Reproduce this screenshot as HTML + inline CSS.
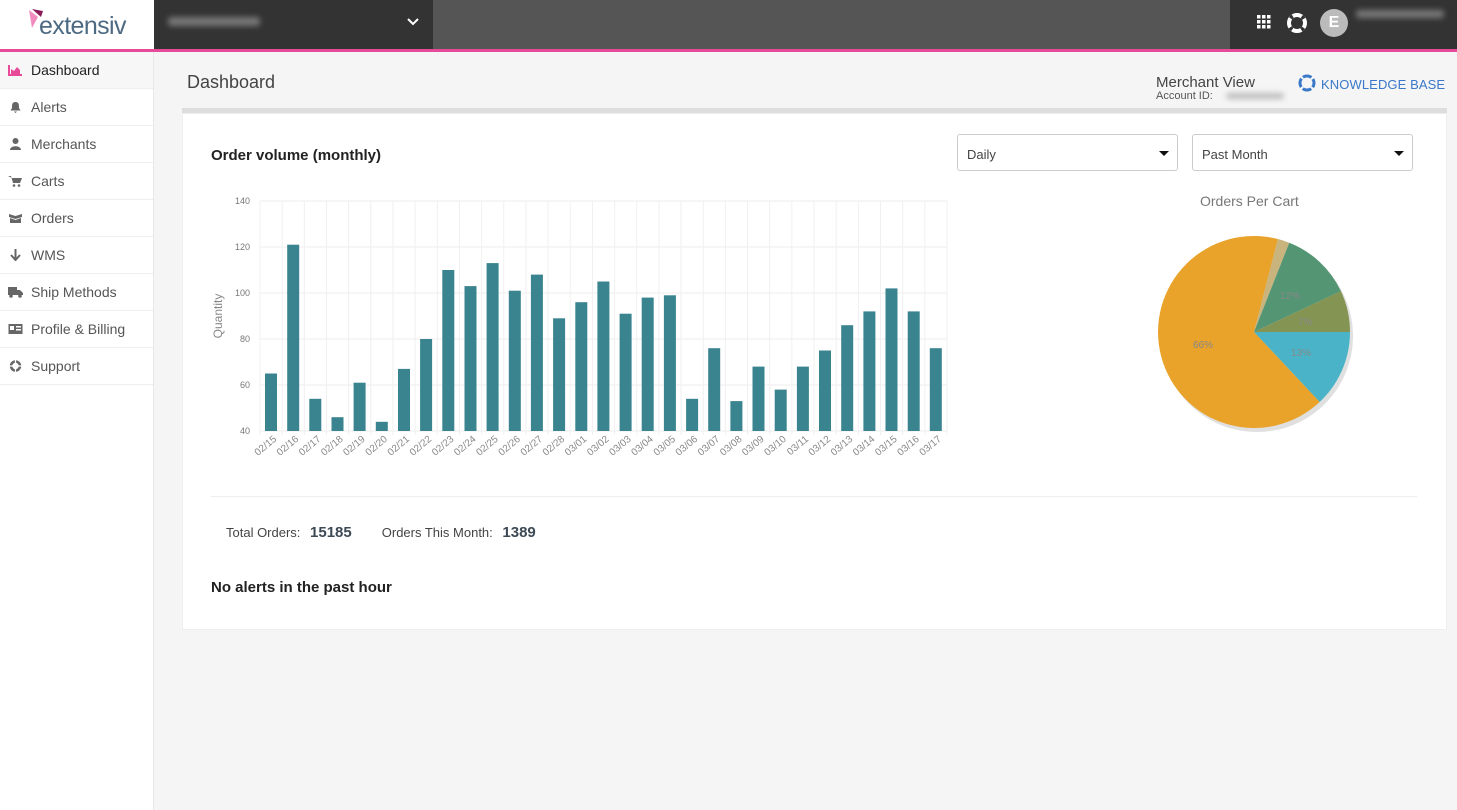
<!DOCTYPE html>
<html><head><meta charset="utf-8"><style>
*{margin:0;padding:0;box-sizing:border-box}
body{width:1457px;height:810px;overflow:hidden;font-family:"Liberation Sans",sans-serif;background:#f5f5f5;position:relative;color:#333}
.top{position:absolute;left:0;top:0;width:1457px;height:49px;background:#555}
.logo{position:absolute;left:0;top:0;width:154px;height:49px;background:#fff}
.d1{position:absolute;left:154px;top:0;width:279px;height:49px;background:#333}
.d2{position:absolute;left:1230px;top:0;width:227px;height:49px;background:#333}
.pink{position:absolute;left:0;top:49px;width:1457px;height:3px;background:#e84a9a}
.side{position:absolute;left:0;top:52px;width:154px;height:758px;background:#fff;border-right:1px solid #e8e8e8}
.item{height:37px;border-bottom:1px solid #eee;display:flex;align-items:center;font-size:14px;color:#555;padding-left:8px}
.item .ic{width:15px;height:12px;margin-right:8px;display:inline-block}
.item.act{background:#f7f7f7;color:#222}
.blur{background:#888;filter:blur(3px);position:absolute;border-radius:3px}
.card{position:absolute;left:182px;top:113px;width:1265px;height:517px;background:#fff;border:1px solid #eee}
.sel{position:absolute;top:134px;width:221px;height:37px;border:1px solid #ccc;border-radius:3px;background:#fff;font-size:13px;color:#444;padding:12px 9px}
.sel:after{content:"";position:absolute;right:8px;top:16px;border:5px solid transparent;border-top:5px solid #111}
</style></head><body>
<div class="top"></div>
<div class="logo">
<svg width="20" height="22" style="position:absolute;left:28px;top:9px" viewBox="0 0 20 22"><path d="M1 1 L10 8 L4 19 Z" fill="#f08cc0"/><path d="M4 0 L13 8 L15 2 Z" fill="#8a1c5a"/></svg>
<span style="position:absolute;left:39px;top:12px;font-size:25px;color:#4e6a82;letter-spacing:-0.6px">extensiv</span>
</div>
<div class="d1"><div class="blur" style="left:14px;top:17px;width:92px;height:9px;background:#777"></div>
<svg style="position:absolute;left:253px;top:18px" width="12" height="8" viewBox="0 0 12 8"><path d="M1 1 L6 6 L11 1" stroke="#fff" stroke-width="2" fill="none"/></svg></div>
<div class="d2">
<svg style="position:absolute;left:27px;top:15px" width="14" height="14" viewBox="0 0 14 14" fill="#fff"><rect x="0" y="0" width="3.5" height="3.5"/><rect x="5" y="0" width="3.5" height="3.5"/><rect x="10" y="0" width="3.5" height="3.5"/><rect x="0" y="5" width="3.5" height="3.5"/><rect x="5" y="5" width="3.5" height="3.5"/><rect x="10" y="5" width="3.5" height="3.5"/><rect x="0" y="10" width="3.5" height="3.5"/><rect x="5" y="10" width="3.5" height="3.5"/><rect x="10" y="10" width="3.5" height="3.5"/></svg>
<svg style="position:absolute;left:57px;top:13px" width="20" height="20" viewBox="0 0 20 20"><circle cx="10" cy="10" r="8" fill="none" stroke="#fff" stroke-width="4"/><circle cx="10" cy="10" r="8" fill="none" stroke="#333" stroke-width="4" stroke-dasharray="3 9.5" stroke-dashoffset="-5"/></svg>
<div style="position:absolute;left:90px;top:9px;width:28px;height:28px;border-radius:50%;background:#bbb;color:#fff;font-weight:bold;font-size:16px;text-align:center;line-height:28px">E</div>
<div class="blur" style="left:126px;top:10px;width:88px;height:8px;background:#777"></div></div>
<div class="pink"></div>
<div class="side">
<div class="item act"><svg class="ic" viewBox="0 0 15 12"><path d="M1 1 V11 H14" stroke="#e84a9a" stroke-width="2" fill="none"/><path d="M3 10 V5 L6 7 L9 3 L12 6 V10Z" fill="#e84a9a"/></svg>Dashboard</div>
<div class="item"><svg class="ic" viewBox="0 0 15 12"><path d="M7.5 1 C4 1 4 4 4 7 L2.5 9.5 H12.5 L11 7 C11 4 11 1 7.5 1Z M6 10.5 H9 L7.5 12Z" fill="#666"/></svg>Alerts</div>
<div class="item"><svg class="ic" viewBox="0 0 15 12"><circle cx="7.5" cy="3" r="3" fill="#666"/><path d="M2 12 C2 7 13 7 13 12Z" fill="#666"/></svg>Merchants</div>
<div class="item"><svg class="ic" viewBox="0 0 15 12"><path d="M0 1 H3 L5 8 H12 L14 3 H4" fill="#666"/><circle cx="6" cy="10.5" r="1.3" fill="#666"/><circle cx="11" cy="10.5" r="1.3" fill="#666"/></svg>Carts</div>
<div class="item"><svg class="ic" viewBox="0 0 15 12"><path d="M1 2 L7.5 4 L14 2 L14 5 L7.5 7 L1 5Z M2 6 L7.5 8 L13 6 V11 H2Z" fill="#666"/></svg>Orders</div>
<div class="item"><svg class="ic" viewBox="0 0 15 12"><path d="M7.5 0 V10 M3 6 L7.5 11 L12 6" stroke="#666" stroke-width="2" fill="none"/></svg>WMS</div>
<div class="item"><svg class="ic" viewBox="0 0 15 12"><path d="M0 1 H9 V9 H0Z M9 4 H12 L15 7 V9 H9Z" fill="#666"/><circle cx="3" cy="10" r="1.8" fill="#666"/><circle cx="12" cy="10" r="1.8" fill="#666"/></svg>Ship Methods</div>
<div class="item"><svg class="ic" viewBox="0 0 15 12"><rect x="0.5" y="1" width="14" height="10" fill="#666"/><rect x="2" y="3" width="4" height="4" fill="#fff"/><rect x="8" y="3" width="5" height="1.5" fill="#fff"/><rect x="8" y="6" width="5" height="1.5" fill="#fff"/></svg>Profile &amp; Billing</div>
<div class="item"><svg class="ic" viewBox="0 0 15 12"><circle cx="7.5" cy="6" r="4.5" fill="none" stroke="#666" stroke-width="2.5"/><path d="M7.5 0 V12 M1.5 6 H13.5" stroke="#fff" stroke-width="1.2"/></svg>Support</div>
</div>
<div style="position:absolute;left:187px;top:72px;font-size:18px;color:#444">Dashboard</div>
<div style="position:absolute;left:1156px;top:74px;font-size:15px;color:#444">Merchant View</div>
<div style="position:absolute;left:1156px;top:90px;font-size:11px;color:#555">Account ID:</div>
<div class="blur" style="left:1226px;top:93px;width:58px;height:6px;background:#bbb"></div>
<svg style="position:absolute;left:1298px;top:74px" width="18" height="18" viewBox="0 0 18 18"><circle cx="9" cy="9" r="7" fill="none" stroke="#3a78c9" stroke-width="3"/><circle cx="9" cy="9" r="7" fill="none" stroke="#fff" stroke-width="3.2" stroke-dasharray="2 9" stroke-dashoffset="-4.5"/></svg>
<div style="position:absolute;left:1321px;top:77px;font-size:13px;color:#3a78c9;letter-spacing:0.1px">KNOWLEDGE BASE</div>
<div style="position:absolute;left:182px;top:108px;width:1265px;height:5px;background:#ddd"></div>
<div class="card"></div>
<div style="position:absolute;left:211px;top:147px;font-size:15px;font-weight:bold;color:#222">Order volume (monthly)</div>
<div class="sel" style="left:957px">Daily</div>
<div class="sel" style="left:1192px">Past Month</div>
<svg style="position:absolute;left:200px;top:190px" width="760" height="290" viewBox="200 190 760 290" font-family="Liberation Sans,sans-serif">
<g id="c"></g>
</svg>
<script>
(function(){
var s='',vals=[65,121,54,46,61,44,67,80,110,103,113,101,108,89,96,105,91,98,99,54,76,53,68,58,68,75,86,92,102,92,76];
var x0=260,x1=947,y0=431,y1=201,w=(x1-x0)/31;
for(var v=40;v<=140;v+=20){var y=y0-(v-40)*(y0-y1)/100;s+='<line x1="'+x0+'" x2="'+x1+'" y1="'+y+'" y2="'+y+'" stroke="#eee"/><text x="250" y="'+(y+3)+'" font-size="9" fill="#777" text-anchor="end">'+v+'</text>';}
for(var i=0;i<=31;i++){var x=x0+i*w;s+='<line x1="'+x+'" x2="'+x+'" y1="'+y1+'" y2="'+(y0+4)+'" stroke="#f0f0f0"/>';}
var d=['02/15','02/16','02/17','02/18','02/19','02/20','02/21','02/22','02/23','02/24','02/25','02/26','02/27','02/28','03/01','03/02','03/03','03/04','03/05','03/06','03/07','03/08','03/09','03/10','03/11','03/12','03/13','03/14','03/15','03/16','03/17'];
for(var i=0;i<31;i++){var x=x0+i*w+5,h=(vals[i]-40)*(y0-y1)/100;s+='<rect x="'+x.toFixed(1)+'" y="'+(y0-h).toFixed(1)+'" width="12" height="'+h.toFixed(1)+'" fill="#3a8490"/>';
var tx=x0+i*w+w/2+6;s+='<text transform="translate('+tx.toFixed(1)+',440) rotate(-40)" font-size="10" fill="#888" text-anchor="end">'+d[i]+'</text>';}
s+='<text transform="translate(222,316) rotate(-90)" font-size="12" fill="#888" text-anchor="middle">Quantity</text>';
document.getElementById('c').innerHTML=s;})();
</script>
<div style="position:absolute;left:1200px;top:193px;font-size:14px;color:#777">Orders Per Cart</div>
<svg style="position:absolute;left:1150px;top:230px" width="210" height="210" viewBox="1150 230 210 210" font-family="Liberation Sans,sans-serif" font-size="10">
<circle cx="1257" cy="336" r="96" fill="#ccc" opacity="0.6"/>
<path d="M1254 332 L1350 332 A96 96 0 0 1 1319.7 402 Z" fill="#4ab3c8"/>
<path d="M1254 332 L1319.7 402 A96 96 0 1 1 1277.9 239 Z" fill="#e9a32a"/>
<path d="M1254 332 L1277.9 239 A96 96 0 0 1 1289.3 242.7 Z" fill="#c8b47c"/>
<path d="M1254 332 L1289.3 242.7 A96 96 0 0 1 1340.9 291.1 Z" fill="#549674"/>
<path d="M1254 332 L1340.9 291.1 A96 96 0 0 1 1350 332 Z" fill="#849452"/>
<text x="1193" y="348" fill="#888">66%</text><text x="1280" y="299" fill="#888">12%</text><text x="1298" y="325" fill="#888">7%</text><text x="1291" y="356" fill="#888">13%</text>
</svg>
<div style="position:absolute;left:211px;top:496px;width:1206px;height:1px;background:#eee"></div>
<div style="position:absolute;left:226px;top:524px;font-size:13px;color:#444">Total Orders: <b style="font-size:15px;margin-left:6px;color:#3d4a55">15185</b><span style="margin-left:30px">Orders This Month:</span> <b style="font-size:15px;margin-left:6px;color:#3d4a55">1389</b></div>
<div style="position:absolute;left:211px;top:579px;font-size:15px;font-weight:bold;color:#222">No alerts in the past hour</div>
</body></html>
